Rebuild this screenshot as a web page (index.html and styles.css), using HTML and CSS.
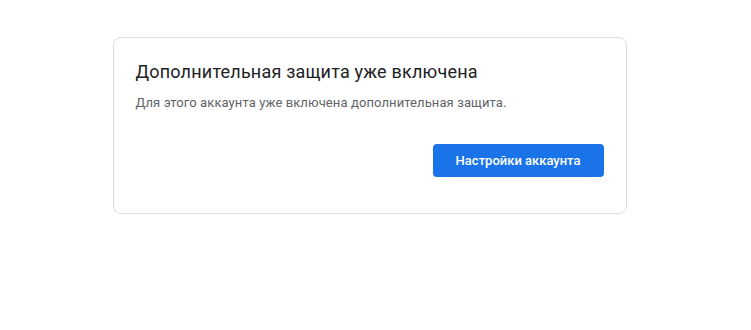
FILE: index.html
```html
<!DOCTYPE html>
<html lang="ru">
<head>
    <meta charset="UTF-8">
    <meta name="viewport" content="width=device-width, initial-scale=1.0">
    <title>Дополнительная защита</title>
    <link rel="stylesheet" href="styles.css">
</head>
<body>
    <div class="page">
        <div class="card">
            <h1 class="card-title">Дополнительная защита уже включена</h1>
            <p class="card-text">Для этого аккаунта уже включена дополнительная защита.</p>
            <div class="card-actions">
                <button type="button" class="btn-primary">Настройки аккаунта</button>
            </div>
        </div>
    </div>
</body>
</html>
```

FILE: styles.css
```css
body {
    margin: 0;
    font-family: Roboto, "Noto Sans", Arial, sans-serif;
    background: #fff;
    color: #202124;
}
.page {
    padding: 37px 12px 0 0;
    display: flex;
    justify-content: center;
}
.card {
    width: 468px;
    padding: 22px 22px 36px;
    border: 1px solid #dadce0;
    border-radius: 8px;
}
.card-title {
    margin: 0;
    font-size: 18px;
    font-weight: 400;
    line-height: 24px;
    letter-spacing: 0.2px;
    color: #202124;
}
.card-text {
    margin: 10px 0 0;
    font-size: 13px;
    line-height: 18px;
    letter-spacing: 0.1px;
    color: #5f6368;
}
.card-actions {
    display: flex;
    justify-content: flex-end;
    margin-top: 32px;
}
.btn-primary {
    height: 33px;
    padding: 0 23px;
    border: none;
    border-radius: 4px;
    background: #1a73e8;
    color: #fff;
    font-family: inherit;
    font-size: 13px;
    font-weight: 500;
    cursor: pointer;
}
```
